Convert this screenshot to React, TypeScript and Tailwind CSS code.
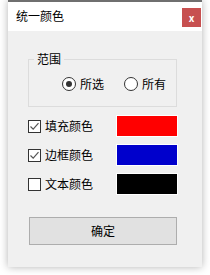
import React from "react";

const font = { fontFamily: '"Noto Sans CJK SC", "Noto Sans", sans-serif' };

function Radio({ checked, label }: { checked?: boolean; label: string }) {
  return (
    <div className="flex items-center gap-[4px]">
      <span className="w-[14px] h-[14px] rounded-full border border-[#333333] bg-white flex items-center justify-center">
        {checked && <span className="w-[6px] h-[6px] rounded-full bg-[#333333]" />}
      </span>
      <span className="text-[12px] leading-[16px] text-black">{label}</span>
    </div>
  );
}

function ColorRow({ checked, label, color }: { checked?: boolean; label: string; color: string }) {
  return (
    <div className="flex items-center h-[22px]">
      <span className="w-[13px] h-[13px] border border-[#333333] bg-white flex items-center justify-center">
        {checked && (
          <svg width="11" height="11" viewBox="0 0 11 11">
            <path d="M1.5 5.5 L4.2 8.2 L9.5 2.2" fill="none" stroke="#555555" strokeWidth="1.2" />
          </svg>
        )}
      </span>
      <span className="ml-[4px] text-[12px] leading-[16px] text-black">{label}</span>
      <div className="ml-auto mr-[24px] w-[62px] h-[22px] border border-white" style={{ backgroundColor: color }} />
    </div>
  );
}

export default function App() {
  return (
    <div className="w-[210px] h-[275px] bg-white" style={font}>
      <div className="mx-auto w-[194px] h-[267px] flex flex-col shadow-[0_0_8px_rgba(0,0,0,0.3)]">
        {/* title bar */}
        <div className="h-[31px] border-t-2 border-[#6f6f6f] bg-white flex items-start">
          <span className="ml-[8px] mt-[5px] text-[12px] leading-[18px] text-black">统一颜色</span>
          <button className="ml-auto mr-[1px] mt-[6px] w-[19px] h-[19px] bg-[#c75050] text-white text-[10px] font-bold leading-none flex items-center justify-center">
            x
          </button>
        </div>

        {/* body */}
        <div className="flex-1 bg-[#f0f0f0] pl-[20px]">
          <fieldset className="mt-[20px] w-[149px] h-[56px] border border-[#dcdcdc] px-0">
            <legend className="ml-[5px] px-[3px] text-[12px] leading-[16px] text-black">范围</legend>
            <div className="flex items-center gap-[20px] pl-[33px] mt-[9px]">
              <Radio checked label="所选" />
              <Radio label="所有" />
            </div>
          </fieldset>

          <div className="mt-[8px] flex flex-col gap-[7px]">
            <ColorRow checked label="填充颜色" color="#ff0000" />
            <ColorRow checked label="边框颜色" color="#0000cc" />
            <ColorRow label="文本颜色" color="#000000" />
          </div>

          <button className="mt-[22px] ml-[1px] w-[148px] h-[28px] bg-[#e1e1e1] border border-[#adadad] text-[12px] text-black">
            确定
          </button>
        </div>
      </div>
    </div>
  );
}
